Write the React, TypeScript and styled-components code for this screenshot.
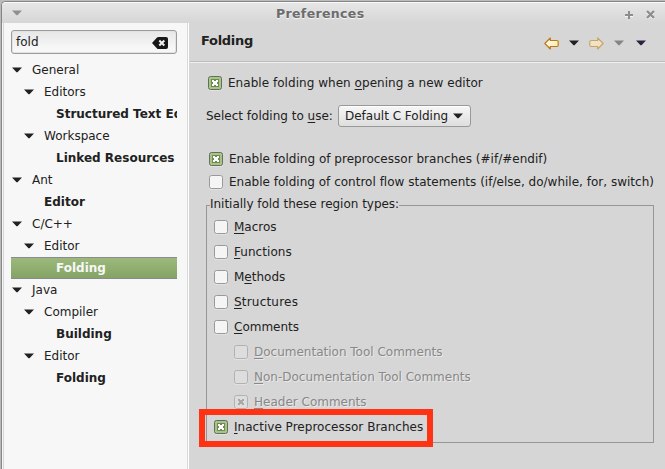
import React from "react";
import styled, { createGlobalStyle } from "styled-components";

const Global = createGlobalStyle`
  * { box-sizing: border-box; }
  html, body { margin: 0; padding: 0; overflow: hidden; background: #d6d6d6; }
  svg { display: block; flex: none; }
`;

const Window = styled.div`
  width: 665px;
  height: 469px;
  border-top: 1px solid #bdbdbd;
  border-left: 1px solid #bababa;
  background: #bababa;
  color: #212121;
  font-family: "DejaVu Sans", "Noto Sans", sans-serif;
  font-size: 12px;
  line-height: 22px;
  white-space: nowrap;
  overflow: hidden;
`;

const Frame = styled.div`
  height: 480px;
  width: 665px;
  border: 1px solid #858585;
  border-right: 0;
  border-radius: 5px 0 0 0;
  background: #d6d6d6;
  box-shadow: inset 1px 1px 0 #f8f8f8;
`;

const TitleBar = styled.header`
  height: 21px;
  display: flex;
  align-items: center;
  padding: 0 11px 0 10px;
  border-top: 1px solid #fafafa;
  border-radius: 4px 0 0 0;
  background: linear-gradient(#e6e6e6, #d6d6d6);
`;

const Title = styled.h1`
  flex: 1;
  margin: 1px 0 0 254px;
  font-size: 12.5px;
  letter-spacing: 0.35px;
  color: #6c6c6c;
  text-shadow: 0 1px #f5f5f5;
`;

const WindowButtons = styled.div`
  display: flex;
  align-items: center;
  gap: 13px;
  margin-top: 3px;
`;

const Body = styled.div`
  display: grid;
  grid-template-columns: 185px 1fr;
  height: 447px;
  padding-left: 2px;
`;

const Sidebar = styled.aside`
  background: #f7f7f7;
  border-right: 1px solid #fff;
  box-shadow: inset -1px 0 #d9d9d9;
  padding: 7px 11px 0 7px;
`;

const Search = styled.div`
  display: flex;
  justify-content: space-between;
  align-items: center;
  width: 166px;
  height: 24px;
  padding: 0 8px 0 4px;
  border: 1px solid #9b9b9b;
  border-radius: 3px;
  background: linear-gradient(#e7e7e7, #f7f7f7 80%);
  box-shadow: inset 0 0 0 1px #e3e3e3;

  svg { margin-top: 2px; }
`;

const Tree = styled.div`
  width: 166px;
  margin-top: 5px;
`;

const Node = styled.div<{ $depth: number; $leaf?: boolean; $selected?: boolean }>`
  display: flex;
  align-items: center;
  height: 22px;
  padding-left: ${(p) => p.$depth * 12 + (p.$leaf ? 21 : 1)}px;
  gap: 10px;
  overflow: hidden;
  font-weight: ${(p) => (p.$leaf ? 700 : 400)};
  ${(p) =>
    p.$selected &&
    `color: #f7f7f7;
     background: linear-gradient(#9db97d, #83a464);
     border-top: 1px solid #8b8b8b;
     border-bottom: 1px solid #8b8b8b;`}
`;

const Page = styled.main`
  padding-left: 1px;
`;

const PageHeader = styled.div`
  display: flex;
  align-items: center;
  height: 40px;
  padding: 0 20px 3px 11px;
  border-bottom: 1px solid #f0f0f0;
  box-shadow: inset 0 -1px #bdbdbd;
`;

const Heading = styled.h2`
  flex: 1;
  margin: 0;
  font-size: 13px;
  letter-spacing: -0.3px;
`;

const Toolbar = styled.div`
  display: flex;
  align-items: center;
  gap: 10px;
  padding-top: 4px;

  svg:last-child { margin-left: 2px; }
`;

const Option = styled.label<{ $indent: number; $height: number; $disabled?: boolean }>`
  display: flex;
  align-items: center;
  height: ${(p) => p.$height}px;
  padding-left: ${(p) => p.$indent}px;
  gap: 6px;
  color: ${(p) => (p.$disabled ? "#888" : "#212121")};
  text-shadow: ${(p) => (p.$disabled ? "1px 1px #e9e9e9" : "none")};
`;

const Box = styled.span<{ $on?: boolean; $disabled?: boolean }>`
  display: grid;
  place-items: center;
  flex: none;
  width: 14px;
  height: 14px;
  border-radius: 2.5px;
  border: 1px solid ${(p) => (p.$disabled ? "#b1b1b1" : p.$on ? "#666c61" : "#999")};
  background: ${(p) => (p.$disabled ? "#dddddd" : p.$on ? "#a6c683" : "#f5f5f5")};
  box-shadow: 0 1px #e2e2e2;
`;

const Label = styled.span<{ $spacing?: number }>`
  letter-spacing: ${(p) => p.$spacing ?? 0}px;
`;

const Key = styled.u`
  text-decoration: underline;
  text-decoration-thickness: 1px;
  text-underline-offset: 2px;
  text-decoration-skip-ink: none;
`;

const SelectRow = styled.div`
  display: flex;
  align-items: center;
  height: 22px;
  margin: 11px 0 20px;
  padding-left: 16px;
`;

const Combo = styled.div`
  display: flex;
  align-items: center;
  justify-content: space-between;
  width: 133px;
  height: 22px;
  margin-left: auto;
  margin-right: 195px;
  padding: 0 7px 0 6px;
  border: 1px solid #999;
  border-radius: 3px;
  background: linear-gradient(#f7f7f7, #dedede);
  box-shadow: inset 0 1px #fff;
`;

const Group = styled.fieldset`
  width: 448px;
  height: 250px;
  margin: 0 0 0 16px;
  padding: 0;
  border: 1px solid #969696;
  min-width: 0;
`;

const Legend = styled.legend`
  height: 24px;
  margin-left: 3px;
  padding: 0 0 2px;
  letter-spacing: -0.02px;
`;

const GroupItems = styled.div`
  margin-top: -3px;
`;

const Highlight = styled.div`
  position: absolute;
  left: 199px;
  top: 409px;
  width: 234px;
  height: 38px;
  border: 6px solid #ff3314;
`;

const Triangle = ({ color = "#212121" }: { color?: string }) => (
  <svg width="10" height="6" viewBox="0 0 10 6">
    <path d="M0 .5h10L5.5 5.3h-1z" fill={color} />
  </svg>
);

const Cross = ({ color }: { color: string }) => (
  <svg width="8" height="8" viewBox="0 0 8 8">
    <path d="M1 1h2v1h2V1h2v2H6v2h1v2H5V6H3v1H1V5h1V3H1z" fill={color} />
  </svg>
);

const CheckedMark = () => (
  <svg width="10" height="10" viewBox="0 0 10 10" shapeRendering="crispEdges">
    <path d="M1 1h8v8H1z" fill="#6f8b55" />
    <path d="M2 2h2v1h2V2h2v2H7v2h1v2H6V7H4v1H2V6h1V4H2z" fill="#fff" />
  </svg>
);

const Arrow = ({ right }: { right?: boolean }) => (
  <svg width="15" height="13" viewBox="0 0 15 13">
    <defs>
      <linearGradient id={right ? "arrowRight" : "arrowLeft"} x1="0" y1="0" x2="1" y2="1">
        <stop offset="0" stopColor={right ? "#f0e6c7" : "#fff"} />
        <stop offset="1" stopColor={right ? "#eddfbb" : "#ffe69b"} />
      </linearGradient>
    </defs>
    <path
      d={
        right
          ? "M14.2 6.5 8.7 1v2.5H2.2Q.8 3.5.8 4.7v3.6q0 1.2 1.4 1.2h6.5V12z"
          : "M.8 6.5 6.3 1v2.5h6.5q1.4 0 1.4 1.2v3.6q0 1.2-1.4 1.2H6.3V12z"
      }
      fill={`url(#${right ? "arrowRight" : "arrowLeft"})`}
      stroke={right ? "#c9a46a" : "#b87919"}
      strokeWidth="1.15"
      strokeLinejoin="round"
    />
  </svg>
);

type CheckProps = {
  text: string;
  mnemonic?: number;
  on?: boolean;
  disabled?: boolean;
  indent: number;
  height?: number;
  spacing?: number;
};

const Check = ({ text, mnemonic = -1, on, disabled, indent, height = 25, spacing }: CheckProps) => (
  <Option $indent={indent} $height={height} $disabled={disabled}>
    <Box $on={on} $disabled={disabled}>
      {on && (disabled ? <Cross color="#a9a9a9" /> : <CheckedMark />)}
    </Box>
    <Label $spacing={spacing}>
      {mnemonic < 0 ? (
        text
      ) : (
        <>
          {text.slice(0, mnemonic)}
          <Key>{text[mnemonic]}</Key>
          {text.slice(mnemonic + 1)}
        </>
      )}
    </Label>
  </Option>
);

const nodes: { text: string; depth: number; leaf?: boolean; selected?: boolean }[] = [
  { text: "General", depth: 0 },
  { text: "Editors", depth: 1 },
  { text: "Structured Text Editors", depth: 2, leaf: true },
  { text: "Workspace", depth: 1 },
  { text: "Linked Resources", depth: 2, leaf: true },
  { text: "Ant", depth: 0 },
  { text: "Editor", depth: 1, leaf: true },
  { text: "C/C++", depth: 0 },
  { text: "Editor", depth: 1 },
  { text: "Folding", depth: 2, leaf: true, selected: true },
  { text: "Java", depth: 0 },
  { text: "Compiler", depth: 1 },
  { text: "Building", depth: 2, leaf: true },
  { text: "Editor", depth: 1 },
  { text: "Folding", depth: 2, leaf: true },
];

const OptionsArea = styled.section`
  padding-top: 9px;
`;

function Options() {
  return (
    <OptionsArea>
      <Check text="Enable folding when opening a new editor" mnemonic={20} on indent={18} height={22} spacing={0.04} />
      <SelectRow>
        <Label>
          Select folding to <Key>u</Key>se:
        </Label>
        <Combo>
          <Label>Default C Folding</Label>
          <Triangle />
        </Combo>
      </SelectRow>
      <Check text="Enable folding of preprocessor branches (#if/#endif)" on indent={19} height={23} spacing={0.02} />
      <Check
        text="Enable folding of control flow statements (if/else, do/while, for, switch)"
        indent={19}
        height={23}
        spacing={0.01}
      />
      <Group>
        <Legend>Initially fold these region types:</Legend>
        <GroupItems>
          <Check text="Macros" mnemonic={0} indent={7} />
          <Check text="Functions" mnemonic={0} indent={7} spacing={0.05} />
          <Check text="Methods" mnemonic={1} indent={7} />
          <Check text="Structures" mnemonic={0} indent={7} spacing={0.2} />
          <Check text="Comments" mnemonic={0} indent={7} />
          <Check text="Documentation Tool Comments" mnemonic={0} disabled indent={27} />
          <Check text="Non-Documentation Tool Comments" mnemonic={0} disabled indent={27} />
          <Check text="Header Comments" mnemonic={0} on disabled indent={27} />
          <Check text="Inactive Preprocessor Branches" mnemonic={0} on indent={7} spacing={0.02} />
        </GroupItems>
      </Group>
    </OptionsArea>
  );
}

export default function App() {
  return (
    <>
      <Global />
      <Window>
        <Frame>
          <TitleBar>
            <Triangle color="#8f8f8f" />
            <Title>Preferences</Title>
            <WindowButtons>
              <svg width="8" height="8" viewBox="0 0 8 8">
                <path d="M4 1v8M0 5h8" stroke="#f7f7f7" strokeWidth="2" />
                <path d="M4 0v8M0 4h8" stroke="#8d8d8d" strokeWidth="2" />
              </svg>
              <svg width="9" height="9" viewBox="0 0 9 9">
                <path d="m1 2 7 7m0-7L1 9" stroke="#f7f7f7" strokeWidth="2.3" />
                <path d="m1 1 7 7m0-7L1 8" stroke="#8d8d8d" strokeWidth="2.3" />
              </svg>
            </WindowButtons>
          </TitleBar>
          <Body>
            <Sidebar>
              <Search>
                <Label>fold</Label>
                <svg width="16" height="12" viewBox="0 0 16 12">
                  <path d="M0 6 5 .6Q5.6 0 6.5 0H14q2 0 2 2v8q0 2-2 2H6.5Q5.6 12 5 11.4z" fill="#171717" />
                  <path d="m7.3 3.5 5 5m0-5-5 5" stroke="#f2f2f2" strokeWidth="2" />
                </svg>
              </Search>
              <Tree>
                {nodes.map((n, i) => (
                  <Node key={i} $depth={n.depth} $leaf={n.leaf} $selected={n.selected}>
                    {!n.leaf && <Triangle />}
                    <Label>{n.text}</Label>
                  </Node>
                ))}
              </Tree>
            </Sidebar>
            <Page>
              <PageHeader>
                <Heading>Folding</Heading>
                <Toolbar>
                  <Arrow />
                  <Triangle />
                  <Arrow right />
                  <Triangle color="#858585" />
                  <Triangle color="#30203f" />
                </Toolbar>
              </PageHeader>
              <Options />
            </Page>
          </Body>
        </Frame>
        <Highlight />
      </Window>
    </>
  );
}
